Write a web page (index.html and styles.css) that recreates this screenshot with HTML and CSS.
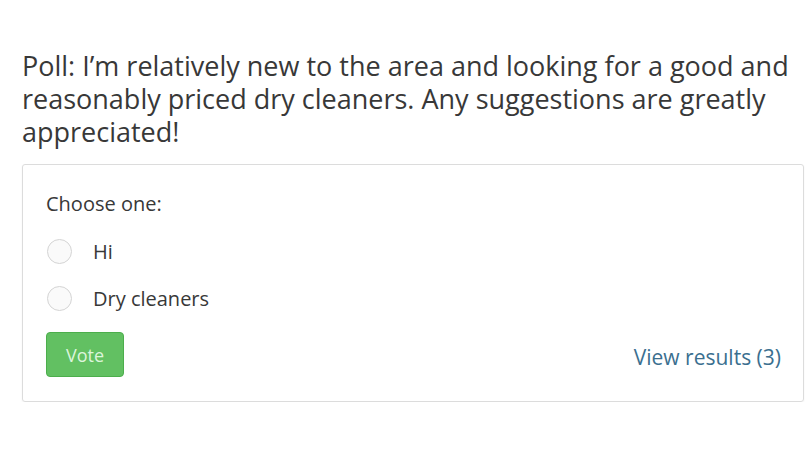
FILE: index.html
```html
<!DOCTYPE html>
<html lang="en">
<head>
  <meta charset="UTF-8" />
  <title>Poll</title>
  <link rel="stylesheet" href="styles.css">
</head>
<body>
  <div class="post">
    <p class="poll-title">Poll: I’m relatively new to the area and looking for a good and reasonably priced dry cleaners. Any suggestions are greatly appreciated!</p>

    <div class="poll-box">
      <div class="choose">Choose one:</div>

      <label class="option"><span class="radio"></span>Hi</label>
      <label class="option"><span class="radio"></span>Dry cleaners</label>

      <div class="poll-footer">
        <button class="vote-btn">Vote</button>
        <a class="results" href="#">View results (3)</a>
      </div>
    </div>
  </div>
</body>
</html>
```

FILE: styles.css
```css
body {
  margin: 0;
  background: #fff;
  font-family: 'Open Sans', sans-serif;
  color: #333;
}

.post {
  padding: 49px 7px 0 22px;
}

.poll-title {
  margin: 0 0 16px;
  padding-right: 10px;
  font-size: 27px;
  line-height: 33px;
  color: #383838;
}

.poll-box {
  border: 1px solid #dcdcdc;
  border-radius: 3px;
  padding: 25px 22px 24px 23px;
  box-shadow: 0 1px 2px rgba(0,0,0,0.06);
}

.choose {
  font-size: 20px;
  line-height: 28px;
  margin-bottom: 19px;
  color: #383838;
}

.option {
  display: flex;
  align-items: center;
  gap: 21px;
  height: 28px;
  font-size: 20px;
  color: #383838;
  margin-bottom: 19px;
  margin-left: 1px;
}

.radio {
  width: 23px;
  height: 23px;
  border: 1px solid #d4d4d4;
  border-radius: 50%;
  background: #fafafa;
}

.poll-footer {
  display: flex;
  justify-content: space-between;
  align-items: center;
  margin-top: 20px;
}

.vote-btn {
  width: 78px;
  height: 45px;
  border: 1px solid #4cae4c;
  border-radius: 4px;
  background: #62c062;
  color: #dcf5dc;
  font-family: 'Open Sans', sans-serif;
  font-size: 18px;
  cursor: pointer;
}

.results {
  color: #3b6f8f;
  text-decoration: none;
  font-size: 21px;
  margin-top: 4px;
}
```
